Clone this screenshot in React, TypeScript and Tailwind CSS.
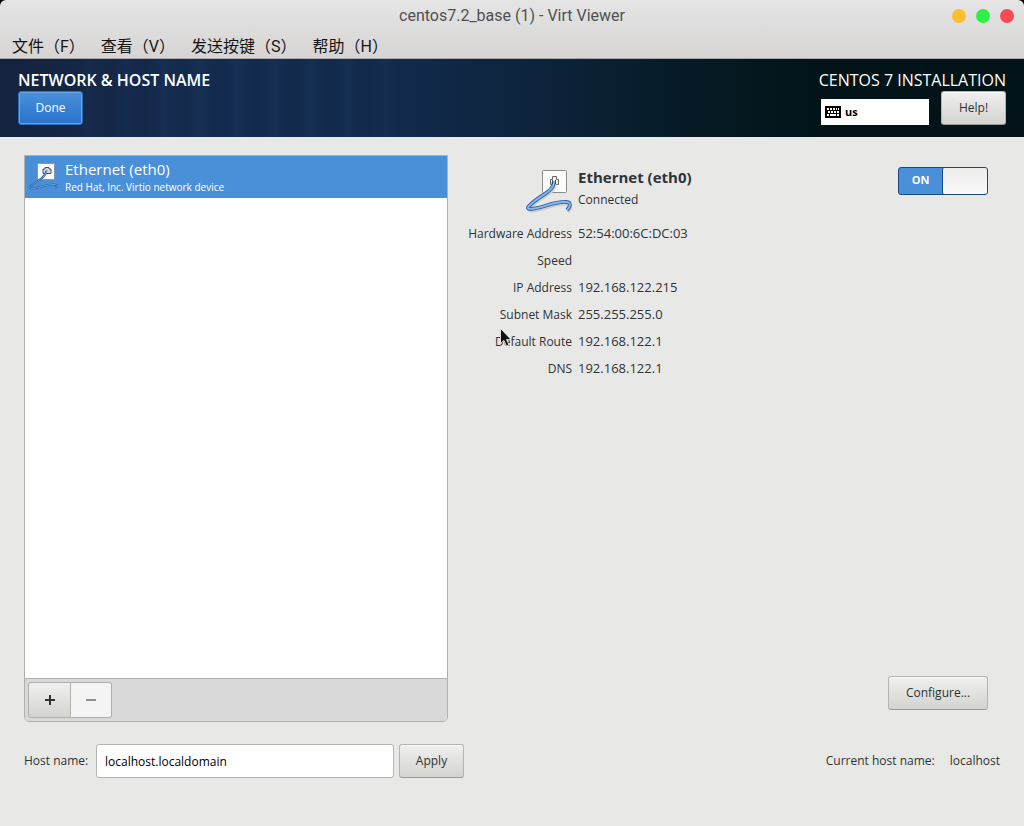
import { ReactNode, useState } from 'react';
import clsx from 'clsx';

interface ButtonProps {
  children: ReactNode;
  className?: string;
  variant?: 'default' | 'suggested';
}

function Button({ children, className, variant = 'default' }: ButtonProps) {
  return (
    <button
      type="button"
      className={clsx(
        'h-[34px] rounded-[3px] border text-xs',
        variant === 'default' &&
          'border-[#b4b4b0] border-b-[#9a9a96] bg-linear-to-b from-[#f0f0f0] to-[#d3d3cf] text-[#2e3436] shadow-[inset_0_1px_0_#fafafa]',
        variant === 'suggested' &&
          'border-[#2a6dbb] bg-linear-to-b from-[#4a90d9] to-[#2a72cc] text-white shadow-[inset_0_0_0_1px_#6aa5e3]',
        className
      )}
    >
      {children}
    </button>
  );
}

const cable = 'M30 14C30 25 17 27 5 39c-2 2-1 3 1.5 3 12-.5 23-8 36-7 4.500.5 4.500 3.500.5 8';
const cableSmall = 'M17.5 9.5C17 17 7 20 1.500 25.500c-1 1.500 0 2 2 2 7-.5 15-4.500 22-4 3 0 3 2 .5 3.500';

function WiredIcon({ className }: { className?: string }) {
  return (
    <svg viewBox="0 0 48 48" className={className} aria-hidden="true">
      <rect x="18.5" y="3.5" width="24" height="22" rx="1" fill="#fbfbfa" stroke="#8b8d88" />
      <path d="M26.5 17.5v-5h2v-3h4v3h2v5z" fill="#f1f1ef" stroke="#666964" />
      <path d={cable} fill="none" stroke="#cccecb" strokeWidth="3" strokeLinejoin="round" transform="translate(1 2)" />
      <path d={cable} fill="none" stroke="#3465a4" strokeWidth="3.8" strokeLinejoin="round" />
      <path d={cable} fill="none" stroke="#6a9fdd" strokeWidth="2.2" strokeLinejoin="round" />
      <path d={cable} fill="none" stroke="#a9cbf2" strokeWidth=".8" strokeLinejoin="round" />
      <path d="M28.5 13v4M31.5 13v4" stroke="#3d4a5c" />
    </svg>
  );
}

function WiredIconSmall() {
  return (
    <svg viewBox="0 0 32 32" className="size-8" aria-hidden="true">
      <rect x="8.5" y="2.5" width="17" height="16" fill="#fcfcfc" stroke="#7d98b8" />
      <path d="M14 12.5V8h2V6.500h4V8h2v4.500z" fill="#d6d9dc" stroke="#44505f" />
      <path d={cableSmall} fill="none" stroke="#2f5f9f" strokeWidth="2" />
      <path d={cableSmall} fill="none" stroke="#6aa0e0" strokeWidth="1" />
    </svg>
  );
}

function KeyboardIcon() {
  return (
    <svg viewBox="0 0 16 12" className="h-3 w-4" aria-hidden="true" shapeRendering="crispEdges">
      <rect width="16" height="12" />
      <path
        d="M2 3h2M5 3h2M8 3h2M11 3h1M13 3h1M3 6h2M6 6h2M9 6h2M12 6h2M2 9h2M5 9h6M12 9h2"
        stroke="#fff"
        strokeWidth="2"
      />
    </svg>
  );
}

function Pointer() {
  return (
    <svg viewBox="0 0 12 19" className="absolute top-0 left-[52px] h-[19px] w-3" aria-hidden="true">
      <path d="M.5.5v15l3.500-3 2.500 5.500 2.500-1-2.500-5.500H11z" fill="#111" stroke="#f4f4f4" strokeWidth=".8" />
    </svg>
  );
}

const menus = ['文件（F）', '查看（V）', '发送按键（S）', '帮助（H）'];

const details = [
  { label: 'Hardware Address', value: '52:54:00:6C:DC:03' },
  { label: 'Speed', value: '' },
  { label: 'IP Address', value: '192.168.122.215' },
  { label: 'Subnet Mask', value: '255.255.255.0' },
  { label: 'Default Route', value: '192.168.122.1', pointer: true },
  { label: 'DNS', value: '192.168.122.1' },
];

function WindowChrome() {
  return (
    <div className="rounded-t-md border-b border-[#a9a9ad] bg-linear-to-b from-[#e5e5e5] to-[#d6d5d4] font-[Roboto,'Noto_Sans_CJK_SC',sans-serif]">
      <div className="grid h-[31px] grid-cols-[1fr_auto_1fr] items-center px-[10px]">
        <h1 className="col-start-2 text-base leading-5 text-[#505050]">centos7.2_base (1) - Virt Viewer</h1>
        <div className="flex justify-end gap-[10px]">
          <button type="button" aria-label="Minimize" className="size-[14px] rounded-full bg-[#fdbe2f]" />
          <button type="button" aria-label="Maximize" className="size-[14px] rounded-full bg-[#2cf046]" />
          <button type="button" aria-label="Close" className="size-[14px] rounded-full bg-[#fb4b52]" />
        </div>
      </div>
      <nav className="flex h-[27px] items-end gap-4 px-3 text-base leading-[22px] text-[#161616]">
        {menus.map((menu) => (
          <button key={menu} type="button" className="whitespace-nowrap">
            {menu}
          </button>
        ))}
      </nav>
    </div>
  );
}

function SpokeHeader() {
  return (
    <header className="relative flex h-[78px] justify-between bg-[linear-gradient(90deg,#14233e_0%,#142c50_18%,#122b4d_38%,#0c2238_55%,#061b27_66%,#021417_80%)] px-[18px] pt-[10px] text-white">
      <div className="absolute inset-y-0 left-20 w-80 bg-[repeating-linear-gradient(90deg,transparent_0px,#2a4c7a1a_9px,transparent_18px,#08142614_29px,transparent_37px)]" />
      <div className="relative flex flex-col items-start">
        <h2 className="text-base leading-[22px] font-semibold">NETWORK &amp; HOST NAME</h2>
        <Button variant="suggested" className="w-[65px]">
          Done
        </Button>
      </div>
      <div className="relative flex flex-col">
        <p className="text-base leading-[22px]">CENTOS 7 INSTALLATION</p>
        <div className="flex justify-end gap-3">
          <button type="button" className="mt-2 flex h-[26px] w-[108px] items-center gap-1 bg-white px-1 text-[11px] font-bold text-black">
            <KeyboardIcon />
            us
          </button>
          <Button className="w-[65px]">Help!</Button>
        </div>
      </div>
    </header>
  );
}

function DeviceList() {
  return (
    <section className="flex flex-col rounded-b-[5px] border border-[#b0b0ae] bg-white">
      <ul className="flex-1">
        <li>
          <button type="button" className="flex h-[42px] w-full items-center bg-[#4a90d9] pl-1 text-left text-white">
            <WiredIconSmall />
            <span className="pl-1">
              <span className="block text-[15px] leading-5">Ethernet (eth0)</span>
              <span className="block text-[10px] leading-4">Red Hat, Inc. Virtio network device</span>
            </span>
          </button>
        </li>
      </ul>
      <div className="flex h-[43px] rounded-b-[4px] border-t border-[#b0b0ae] bg-[#d9d9d9] p-[3px]">
        <button
          type="button"
          aria-label="Add device"
          className="flex h-9 w-[43px] items-center justify-center rounded-l-[3px] border border-[#b0b0ae] bg-linear-to-b from-[#f0f0f0] to-[#d3d3cf]"
        >
          <svg viewBox="0 0 10 10" className="size-[10px]" aria-hidden="true">
            <path d="M5 0v10M0 5h10" stroke="#2e3436" strokeWidth="2" />
          </svg>
        </button>
        <button
          type="button"
          aria-label="Remove device"
          disabled
          className="flex h-9 w-[41px] items-center justify-center rounded-r-[3px] border border-l-0 border-[#b0b0ae] bg-[#f4f4f4]"
        >
          <svg viewBox="0 0 10 10" className="size-[10px]" aria-hidden="true">
            <path d="M0 5h10" stroke="#8d9091" strokeWidth="2" />
          </svg>
        </button>
      </div>
    </section>
  );
}

function Switch() {
  const [on, setOn] = useState(true);

  return (
    <label className={clsx('flex h-7 w-[90px] rounded-[3px] border border-[#1c4a80]', on ? 'bg-[#4a90d9]' : 'flex-row-reverse bg-[#c8c8c6]')}>
      <input
        type="checkbox"
        role="switch"
        aria-label="Ethernet (eth0)"
        checked={on}
        onChange={() => setOn(!on)}
        className="sr-only"
      />
      <span className={clsx('flex-1 text-center text-[11px] leading-6 font-bold', on ? 'text-white' : 'text-[#555]')}>
        {on ? 'ON' : 'OFF'}
      </span>
      <span className="w-[45px] rounded-[2px] border-l border-[#1c4a80] bg-linear-to-b from-[#ececec] to-[#fafafa]" />
    </label>
  );
}

function DeviceDetails() {
  return (
    <section className="flex flex-col pr-3">
      <div className="flex items-start pt-3">
        <div className="flex w-[124px] justify-end">
          <WiredIcon className="size-12" />
        </div>
        <div className="flex-1 pl-[6px]">
          <h3 className="text-[15px] leading-5 font-bold">Ethernet (eth0)</h3>
          <p className="text-xs leading-[26px]">Connected</p>
        </div>
        <Switch />
      </div>
      <dl className="mt-[5px] text-xs leading-[27px]">
        {details.map(({ label, value, pointer }) => (
          <div key={label} className="flex gap-[6px]">
            <dt className="relative w-[124px] text-right whitespace-nowrap">
              {label}
              {pointer && <Pointer />}
            </dt>
            <dd className="text-[13px] leading-[27px]">{value}</dd>
          </div>
        ))}
      </dl>
      <div className="mt-auto flex justify-end pb-3">
        <Button className="w-[100px]">Configure...</Button>
      </div>
    </section>
  );
}

export default function App() {
  return (
    <div className="flex min-h-screen flex-col bg-black font-['Open_Sans','Noto_Sans_CJK_SC',sans-serif] text-[#2e3436]">
      <WindowChrome />
      <SpokeHeader />
      <main className="flex flex-1 flex-col bg-[#e8e8e7] px-6 pt-[18px] pb-12">
        <div className="grid flex-1 grid-cols-[424fr_552fr]">
          <DeviceList />
          <DeviceDetails />
        </div>
        <form className="mt-[22px] flex items-center text-xs" onSubmit={(e) => e.preventDefault()}>
          <label htmlFor="hostname" className="w-[72px]">
            Host name:
          </label>
          <input
            id="hostname"
            type="text"
            defaultValue="localhost.localdomain"
            className="h-[34px] w-[298px] rounded-[3px] border border-[#b4b4b0] bg-white px-2 text-black"
          />
          <Button className="ml-[5px] w-[65px]">Apply</Button>
          <p className="ml-auto flex gap-[15px]">
            <span>Current host name:</span>
            <span>localhost</span>
          </p>
        </form>
      </main>
    </div>
  );
}
